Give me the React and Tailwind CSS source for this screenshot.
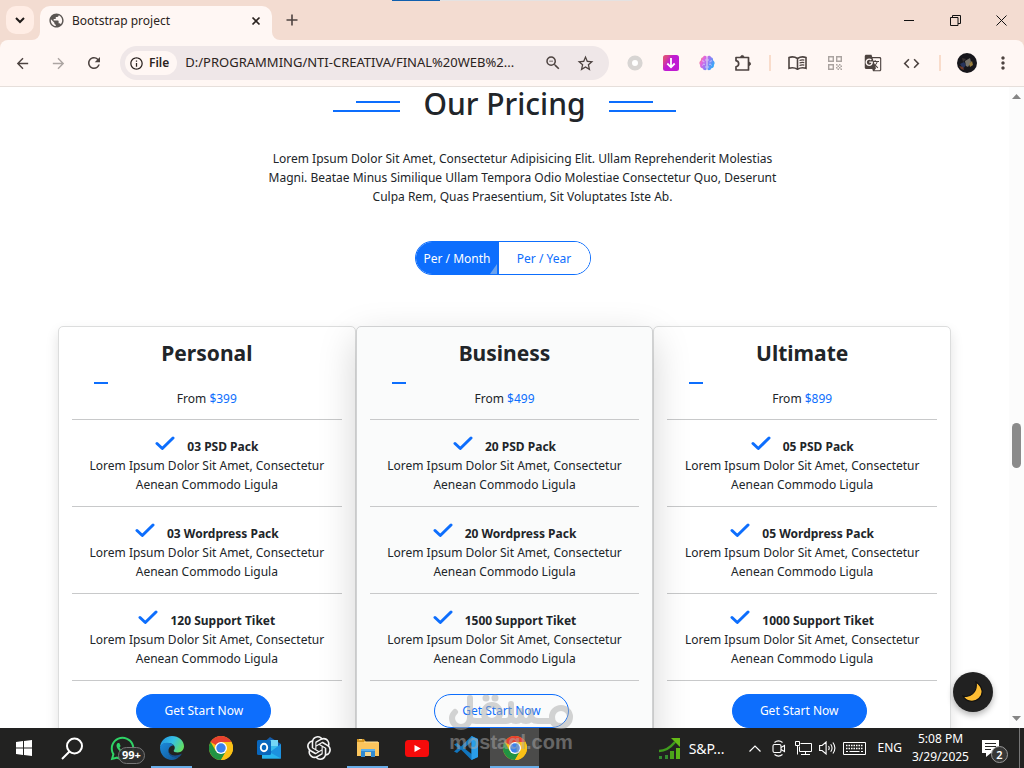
import React from "react";
import {
  MdArrowBack, MdArrowForward, MdRefresh, MdInfoOutline, MdStarBorder,
  MdGTranslate, MdMoreVert, MdPublic, MdCode, MdZoomOut,
} from "react-icons/md";
import { FaWhatsapp } from "react-icons/fa";
import { SiOpenai } from "react-icons/si";

/* ---------- browser chrome ---------- */

function TabStrip() {
  return (
    <div className="flex h-10 shrink-0 items-stretch bg-[#f3dcd1]">
      <button aria-label="Search tabs" className="mt-[6px] ml-[6px] flex size-7 items-center justify-center rounded-[10px] bg-[#ffede5]">
        <svg width="10" height="7" viewBox="0 0 10 7" fill="none" stroke="#1f1a18" strokeWidth="2"><path d="M1 1l4 4 4-4" /></svg>
      </button>
      <div className="flex items-end">
        <svg width="8" height="8" className="-ml-[2px]"><path d="M8 0v8H0a8 8 0 0 0 8-8z" fill="#fff7f4" /></svg>
      </div>
      <div className="mt-[6px] flex w-[232px] items-center rounded-t-[10px] bg-[#fff7f4] pr-[11px] pb-[5px] pl-2">
        <MdPublic size={17} color="#5b5653" />
        <span className="flex-1 pl-[7px] text-[12px] text-[#2b2320]">Bootstrap project</span>
        <button aria-label="Close tab">
          <svg width="10" height="10" viewBox="0 0 10 10" stroke="#2b2320" strokeWidth="1.7"><path d="M1.5 1.5l7 7M8.500 1.500l-7 7" /></svg>
        </button>
      </div>
      <div className="flex items-end">
        <svg width="8" height="8"><path d="M0 0v8h8a8 8 0 0 1-8-8z" fill="#fff7f4" /></svg>
      </div>
      <button aria-label="New tab" className="ml-[6px]">
        <svg width="12" height="12" viewBox="0 0 12 12" stroke="#4d4340" strokeWidth="1.6"><path d="M6 .5v11M.5 6h11" /></svg>
      </button>
      <div className="flex min-w-0 flex-1 items-start justify-center pr-40">
        <div className="flex h-px w-60 bg-[#e4e2e2]"><div className="w-12 bg-[#0f5fae]" /></div>
      </div>
      <div className="flex shrink-0">
        <button aria-label="Minimize" className="flex w-[46px] items-center justify-center">
          <svg width="10" height="10"><path d="M0 5.500h10" stroke="#111" /></svg>
        </button>
        <button aria-label="Restore" className="flex w-[46px] items-center justify-center">
          <svg width="11" height="11" fill="none" stroke="#111"><path d="M.5 2.500h7.500v8H.5zM2.500 2.500v-2h8v8H8" /></svg>
        </button>
        <button aria-label="Close" className="flex w-[46px] items-center justify-center">
          <svg width="11" height="11" stroke="#111"><path d="M.5.5l10 10M10.500.5l-10 10" /></svg>
        </button>
      </div>
    </div>
  );
}

function ToolButton({ label, wide, children }) {
  return (
    <button aria-label={label} className={`flex shrink-0 items-center justify-center ${wide ? "w-[38px]" : "w-9"}`}>
      {children}
    </button>
  );
}

function Brain() {
  return (
    <svg width="16" height="16" viewBox="0 0 16 16">
      <defs>
        <linearGradient id="brain" x1="0" y1="0" x2="1" y2=".5">
          <stop offset="0" stopColor="#f9a04a" /><stop offset=".3" stopColor="#e765dd" />
          <stop offset=".6" stopColor="#9b78f4" /><stop offset="1" stopColor="#38a8f8" />
        </linearGradient>
      </defs>
      <path fill="url(#brain)" d="M7.600 1.500C6.500.3 4.500.8 4 2.200 2.300 2.300 1.600 4 2.100 5.200.4 6-.2 8.500 1.100 9.900c-.3 2 1 3.300 2.500 3.300.6 2 2.900 2.500 4 1.300zM8.400 1.500C9.500.3 11.500.8 12 2.200c1.700.1 2.400 1.800 1.900 3 1.700.8 2.300 3.300 1 4.700.3 2-1 3.300-2.500 3.300-.6 2-2.900 2.500-4 1.300z" />
      <path fill="none" stroke="#d9e2ff" strokeWidth=".7" d="M3 6c1.500-.6 2 .3 2 1.300M7.500 5H6M3.500 10.500C4 9 5 9 6 9.500M7.500 12H6M13 6c-1.500-.6-2 .3-2 1.300M8.500 5H10M12.500 10.500C12 9 11 9 10 9.500M8.500 12H10" />
    </svg>
  );
}

function Toolbar() {
  return (
    <div className="bg-[#f3dcd1]">
      <div className="flex h-[47px] items-stretch rounded-t-[8px] border-b border-[#e6dfdb] bg-[#fff7f4] pr-1 pl-1 text-[#4d4340]">
        <ToolButton label="Back"><MdArrowBack size={17} /></ToolButton>
        <ToolButton label="Forward"><MdArrowForward size={17} color="#aca5a2" /></ToolButton>
        <ToolButton label="Reload"><MdRefresh size={18} /></ToolButton>
        <div className="mx-2 my-[6px] flex min-w-0 flex-1 items-center rounded-full bg-[#efe7e8] pr-[14px] pl-[5px]">
          <button className="flex h-6 items-center gap-[5px] rounded-full bg-[#fff7f4] px-1 pr-2 text-[12px] font-semibold text-[#2b2320]">
            <MdInfoOutline size={15} />File
          </button>
          <input
            aria-label="Address"
            readOnly
            value="D:/PROGRAMMING/NTI-CREATIVA/FINAL%20WEB%2..."
            className="ml-2 min-w-0 flex-1 bg-transparent text-[13px] text-[#2b2320] outline-none"
          />
          <button aria-label="Zoom" className="ml-2"><MdZoomOut size={18} /></button>
          <button aria-label="Bookmark" className="ml-[14px]"><MdStarBorder size={19} /></button>
        </div>
        <ToolButton label="Recorder">
          <svg width="16" height="16"><circle cx="8" cy="8" r="5.300" fill="#fff" stroke="#d8d5d3" strokeWidth="4.600" /></svg>
        </ToolButton>
        <ToolButton label="Downloader">
          <svg width="16" height="16">
            <defs><linearGradient id="dl" x1="0" y1="0" x2=".6" y2=".4"><stop offset=".3" stopColor="#dd4c80" /><stop offset=".8" stopColor="#c01bd2" /></linearGradient></defs>
            <rect width="16" height="16" rx="2.500" fill="url(#dl)" />
            <path d="M8 3v9M4.300 8.500L8 12.300l3.700-3.800" fill="none" stroke="#fff" strokeWidth="1.800" />
          </svg>
        </ToolButton>
        <ToolButton label="Assistant"><Brain /></ToolButton>
        <ToolButton label="Extensions">
          <svg width="18" height="18" viewBox="0 0 18 18" fill="none" stroke="#4d4340" strokeWidth="1.700" strokeLinejoin="round">
            <path d="M2 3.500h12.500v12.500H2v-3.200c3.600-.8 3.600-5.300 0-6.100z" />
            <path d="M6.700 3a1.600 1.600 0 0 1 3.200 0zM15 8.200a1.600 1.600 0 0 1 0 3.200z" fill="#4d4340" strokeWidth=".8" />
          </svg>
        </ToolButton>
        <div className="mr-[7px] ml-2 h-4 w-0.5 shrink-0 self-center bg-[#f9dccb]" />
        <ToolButton label="Reading mode" wide>
          <svg width="19" height="14" viewBox="0 0 19 14" fill="none" stroke="#4d4340" strokeWidth="1.600">
            <path d="M9.500 2.500C7 .8 3.500.6 1 1.500v10.800c2.500-.8 6-.6 8.500 1 2.500-1.600 6-1.800 8.500-1V1.500c-2.500-.9-6-.7-8.500 1zM9.500 2.500v10.800" />
            <path d="M11.500 4.500c1.500-.6 3-.7 4.800-.4M11.500 7c1.500-.6 3-.7 4.800-.4M11.500 9.500c1.500-.6 3-.7 4.800-.4" strokeWidth="1.200" />
          </svg>
        </ToolButton>
        <ToolButton label="QR code" wide>
          <svg width="14" height="14" viewBox="0 0 14 14" fill="none" stroke="#aaa3a0" strokeWidth="1.400">
            <path d="M.7.700h4.600v4.600H.7zM8.700.7h4.600v4.600H8.700zM.7 8.700h4.600v4.600H.7z" />
            <path d="M8 8.700h1.500M11 8.700h1.500M9.500 10.200H11M12.500 10.200H14M8 11.700h1.500M11 11.700h1.500M9.500 13.200H11M12.500 13.200H14" />
          </svg>
        </ToolButton>
        <ToolButton label="Translate" wide><MdGTranslate size={18} /></ToolButton>
        <ToolButton label="Developer tools" wide><MdCode size={19} /></ToolButton>
        <div className="mr-[7px] ml-[9px] h-4 w-0.5 shrink-0 self-center bg-[#f9dccb]" />
        <ToolButton label="Profile" wide>
          <svg width="20" height="20" viewBox="0 0 20 20">
            <circle cx="10" cy="10" r="10" fill="#17161b" />
            <path d="M3 11l4-2 2 3-3 4z" fill="#27345c" /><path d="M2 13l4 1 1 3-3-1z" fill="#6e3a2a" />
            <path d="M8 8l5-3 1 4-3 5-2-1z" fill="#77736b" /><path d="M12 11l3-3 1 4-3 2z" fill="#9a7f3e" /><path d="M5 5l4 1-3 3z" fill="#3b3334" />
          </svg>
        </ToolButton>
        <button aria-label="Menu" className="flex w-[34px] shrink-0 items-center justify-center"><MdMoreVert size={20} /></button>
      </div>
    </div>
  );
}

/* ---------- pricing page ---------- */

const plans = [
  { name: "Personal", price: "$399", features: ["03 PSD Pack", "03 Wordpress Pack", "120 Support Tiket"] },
  { name: "Business", price: "$499", features: ["20 PSD Pack", "20 Wordpress Pack", "1500 Support Tiket"], featured: true },
  { name: "Ultimate", price: "$899", features: ["05 PSD Pack", "05 Wordpress Pack", "1000 Support Tiket"] },
];

function Check() {
  return (
    <svg width="20" height="15" viewBox="0 0 20 15" fill="none" stroke="#0d6efd" strokeWidth="3" strokeLinecap="round" strokeLinejoin="round" className="mb-[5px]">
      <path d="M2 7.500l5.300 5L18 2" />
    </svg>
  );
}

function PlanCard({ plan }) {
  return (
    <article
      className={`flex flex-1 flex-col rounded-[5px] border px-[13px] pt-[11px] text-center ${
        plan.featured
          ? "relative z-10 border-[#d0d1d2] bg-[#fafbfb] shadow-[0_13px_38px_rgba(0,0,0,0.175)]"
          : "border-[#dcdddd] bg-white shadow-[0_6px_13px_rgba(0,0,0,0.12)]"
      }`}
    >
      <h2 className="text-[21px] leading-[30px] font-bold">{plan.name}</h2>
      <div className="mt-[14px] ml-[22px] h-0.5 w-[14px] bg-[#0d6efd]" />
      <p className="mt-[5px] leading-[19px]">From <span className="text-[#0d6efd]">{plan.price}</span></p>
      <ul className="mt-[11px]">
        {plan.features.map((feature) => (
          <li key={feature} className="h-[87px] border-t border-[#c8c9ca] pt-[16px] leading-[19px]">
            <div className="flex h-5 items-center justify-center gap-3">
              <Check />
              <strong className="font-bold">{feature}</strong>
            </div>
            Lorem Ipsum Dolor Sit Amet, Consectetur
            <br />
            Aenean Commodo Ligula
          </li>
        ))}
      </ul>
      <div className="border-t border-[#c8c9ca] pt-[13px] pr-[6px] pb-5">
        <button
          className={`h-[34px] w-[135px] rounded-full border border-[#0d6efd] text-[12px] ${
            plan.featured ? "text-[#0d6efd]" : "bg-[#0d6efd] text-white"
          }`}
        >
          Get Start Now
        </button>
      </div>
    </article>
  );
}

function HeadingLines({ flip }) {
  return (
    <div className={`flex w-[67px] flex-col gap-[7px] ${flip ? "items-start" : "items-end"}`}>
      <div className="h-0.5 w-11 bg-[#0d6efd]" />
      <div className="h-0.5 w-full bg-[#0d6efd]" />
    </div>
  );
}

function Pricing() {
  return (
    <main className="min-w-0 flex-1 text-[12px] text-[#212529]">
      <div className="flex h-[38px] items-center justify-center gap-[23px]">
        <HeadingLines />
        <h1 className="pb-1 text-[30px] leading-[34px] font-medium">Our Pricing</h1>
        <HeadingLines flip />
      </div>
      <p className="mt-6 pl-9 text-center leading-[19px]">
        Lorem Ipsum Dolor Sit Amet, Consectetur Adipisicing Elit. Ullam Reprehenderit Molestias
        <br />
        Magni. Beatae Minus Similique Ullam Tempora Odio Molestiae Consectetur Quo, Deserunt
        <br />
        Culpa Rem, Quas Praesentium, Sit Voluptates Iste Ab.
      </p>
      <div className="mt-[35px] flex justify-center pr-1">
        <div className="flex h-[34px] overflow-hidden rounded-full border border-[#0d6efd]">
          <button className="relative w-[83px] bg-[#0d6efd] pt-0.5 text-white">
            Per / Month
            <svg width="7" height="10" className="absolute right-[2px] bottom-0"><path d="M7 0v10H0z" fill="#6ba3ee" /></svg>
          </button>
          <button className="w-[91px] bg-white pt-0.5 text-[#0d6efd]">Per / Year</button>
        </div>
      </div>
      <section className="mx-[58px] mt-[51px] flex">
        {plans.map((plan) => <PlanCard key={plan.name} plan={plan} />)}
      </section>
    </main>
  );
}

function Scrollbar() {
  return (
    <div className="flex w-[15px] shrink-0 flex-col items-center bg-[#fcfcfc]">
      <svg width="9" height="5" className="mt-[7px]"><path d="M0 5l4.500-5L9 5z" fill="#858585" /></svg>
      <div className="flex-[324]" />
      <div className="h-[45px] w-[9px] rounded-full bg-[#8b8b8b]" />
      <div className="flex-[248]" />
      <svg width="9" height="5" className="mb-[7px]"><path d="M0 0l4.500 5L9 0z" fill="#858585" /></svg>
    </div>
  );
}

/* ---------- taskbar ---------- */

function ChromeLogo() {
  return (
    <svg width="24" height="24" viewBox="0 0 24 24">
      <circle cx="12" cy="12" r="12" fill="#fbc116" />
      <path d="M12 12L1.600 6A12 12 0 0 1 22.400 6H12z" fill="#e8412f" />
      <path d="M1.600 6A12 12 0 0 0 12 24l5.200-9L12 12l-5.200 3z" fill="#229342" />
      <path d="M12 6h10.400A12 12 0 0 1 12 24l5.200-9z" fill="#fbc116" />
      <circle cx="12" cy="12" r="6" fill="#fff" /><circle cx="12" cy="12" r="4.700" fill="#3b82ee" />
    </svg>
  );
}

function EdgeLogo() {
  return (
    <svg width="24" height="24" viewBox="0 0 24 24">
      <defs>
        <linearGradient id="edgeTop" x1="0" y1=".2" x2="1" y2=".6"><stop offset="0" stopColor="#2295e2" /><stop offset=".5" stopColor="#36c0e5" /><stop offset="1" stopColor="#63df61" /></linearGradient>
        <linearGradient id="edgeLow" x1="0" y1="0" x2="1" y2="1"><stop offset="0" stopColor="#1b8bdc" /><stop offset="1" stopColor="#115494" /></linearGradient>
      </defs>
      <path d="M0 12C0 5 5.500 0 12 0s12 4.800 12 10.300c0 3.700-2.800 6.100-6.200 6.100-3 0-4.400-1-4.100-2 .8-1 1.200-2 1-3.200C14.300 8.800 11.500 7 8 7c-4.500 0-7.500 2-8 5z" fill="url(#edgeTop)" />
      <path d="M0 11.500C.8 8 4 6.700 7.500 6.700c3.300 0 5 1.200 6.500 2.800-2.500-.3-5.500 1.500-5.500 5.300 0 4.500 4.500 7.500 10.500 6-2 2.200-4.500 3.200-7 3.200C5.300 24 0 18.500 0 11.500z" fill="url(#edgeLow)" />
      <path d="M8.600 13.300c-.6 5.200 5.500 8.500 13.300 4.200-.7 1.600-1.700 2.700-2.900 3.600-6 1.800-11.500-2-10.400-7.800z" fill="#174e8a" />
    </svg>
  );
}

function OutlookLogo() {
  return (
    <svg width="25" height="24" viewBox="0 0 25 24">
      <path d="M13 1l11 7v14H5V8z" fill="#155ca9" /><path d="M7 4h14v11H7z" fill="#38bbec" /><path d="M14 4h7v6h-7z" fill="#74d6f5" />
      <path d="M24 8v14.500H5L14.500 15z" fill="#1c91df" /><path d="M5 12l19 10.500H5z" fill="#27b4ee" />
      <rect y="4" width="14" height="15" rx="1.500" fill="#0967bd" />
      <ellipse cx="7" cy="11.500" rx="3.200" ry="3.700" fill="none" stroke="#fff" strokeWidth="1.900" />
    </svg>
  );
}

function VsCodeLogo() {
  return (
    <svg width="24" height="24" viewBox="0 0 24 24">
      <path d="M17.500 0L24 3v18l-6.500 3L7 13.500 3 17 0 15.500 4.200 12 0 8.500 3 7l4 3.500z" fill="#1276be" />
      <path d="M17.500 6v12L10 12z" fill="#1f201f" /><path d="M17.500 0L24 3v18l-6.500 3z" fill="#2a9eea" />
    </svg>
  );
}

function ExplorerLogo() {
  return (
    <svg width="22" height="20" viewBox="0 0 22 20">
      <path d="M0 1h7l2 3h13v3H0z" fill="#d29420" /><path d="M0 4h22v14H0z" fill="#fbc55d" /><path d="M2 1.700h3M7 4h14" stroke="#ffe5a0" />
      <path d="M4 11h14v8h-4v-5H8v5H4z" fill="#318bd2" /><path d="M8 14h6v4H8z" fill="#f4d690" /><path d="M4 11h14v2H4z" fill="#5bb1ed" />
    </svg>
  );
}

const apps = [
  { label: "Edge", icon: <EdgeLogo />, open: true },
  { label: "Chrome", icon: <ChromeLogo /> },
  { label: "Outlook", icon: <OutlookLogo /> },
  { label: "ChatGPT", icon: <SiOpenai size={24} color="#f4f4f4" /> },
  { label: "File Explorer", icon: <ExplorerLogo />, open: true },
  {
    label: "YouTube",
    icon: <svg width="24" height="17"><rect width="24" height="17" rx="3.500" fill="#f60b0b" /><path d="M9.500 5v7l6.300-3.500z" fill="#fff" /></svg>,
  },
  { label: "VS Code", icon: <VsCodeLogo /> },
  { label: "Chrome window", icon: <ChromeLogo />, open: true, active: true },
];

function TaskbarApp({ app }) {
  return (
    <button aria-label={app.label} className={`relative flex w-[49px] shrink-0 items-center justify-center ${app.active ? "bg-[#4b4b4a]" : ""}`}>
      {app.icon}
      {app.open && <span className={`absolute bottom-0 h-0.5 bg-[#69ade8] ${app.active ? "inset-x-0" : "inset-x-1"}`} />}
    </button>
  );
}

function Tray() {
  return (
    <div className="ml-auto flex shrink-0 items-stretch text-[12px] text-white">
      <button className="flex items-center gap-2 text-[14px]">
        <svg width="23" height="22" viewBox="0 0 23 22">
          <path d="M1 14c6 0 11-3 16-9" fill="none" stroke="#409c1e" strokeWidth="2.500" /><path d="M13 1h9v9z" fill="#64bb16" />
          <path d="M18 11h4v11h-4z" fill="#5bb617" /><path d="M12 14h4v8h-4z" fill="#4ba31a" /><path d="M7 18h3v4H7zM1 19h3v3H1z" fill="#338a30" />
        </svg>
        S&amp;P...
      </button>
      <button aria-label="Hidden icons" className="ml-[19px] flex w-6 items-center justify-center">
        <svg width="12" height="7" fill="none" stroke="#fff" strokeWidth="1.200"><path d="M.5 6.500L6 1l5.500 5.500" /></svg>
      </button>
      <button aria-label="Camera" className="flex w-6 items-center justify-center">
        <svg width="14" height="17" fill="none" stroke="#fff" strokeWidth="1.100"><rect x="1" y="4.500" width="8" height="8" rx="1.500" /><path d="M9 7.500l3.500-2v6l-3.500-2M2.500 2.500c2.500-2 5.500-2 8 0M2.500 14.500c2.500 2 5.500 2 8 0" /></svg>
      </button>
      <button aria-label="Network" className="flex w-6 items-center justify-center">
        <svg width="17" height="14" fill="none" stroke="#fff"><path d="M5.500 2.500h11v8h-12v-5M10.500 10.500v3M6 13.500h9M.5.5h4v4h-4zM2.500 4.500v9" /></svg>
      </button>
      <button aria-label="Volume" className="flex w-6 items-center justify-center">
        <svg width="17" height="14" fill="none" stroke="#fff" strokeWidth="1.100"><path d="M.6 4.500h2.500l4-3.500v12l-4-3.500H.6zM9.500 5q1.400 2 0 4M11.700 3.200q2.700 3.800 0 7.600M13.900 1.500q4 5.500 0 11" /></svg>
      </button>
      <button aria-label="Touch keyboard" className="ml-1 flex items-center">
        <svg width="23" height="13" fill="none" stroke="#fff"><path d="M.5.5h22v12H.5z" /><path d="M3 3.500h17M3 6.500h17" strokeDasharray="1.500 1" strokeWidth="1.300" /><path d="M3 9.500h2M6.500 9.500h10M18 9.500h2" /></svg>
      </button>
      <button className="ml-[11px]">ENG</button>
      <div className="ml-2 flex w-[61px] flex-col justify-center text-center leading-[18px] whitespace-nowrap">
        <span>5:08 PM</span><span>3/29/2025</span>
      </div>
      <button aria-label="2 notifications" className="relative ml-[11px] flex w-[26px] items-center">
        <svg width="17" height="17" viewBox="0 0 17 17"><path d="M0 0h17v13h-8l-5 4v-4H0z" fill="#fff" /><path d="M3 3.500h11M3 6.500h11M3 9.500h6" stroke="#252524" /></svg>
        <span className="absolute right-0 bottom-[5px] flex size-[17px] items-center justify-center rounded-full border border-[#999] bg-[#373736] text-[11px] leading-none font-semibold">2</span>
      </button>
      <div className="ml-[11px] w-px bg-[#777]" />
      <div className="w-1" />
    </div>
  );
}

function Taskbar() {
  return (
    <div className="relative z-20 flex h-10 shrink-0 items-stretch bg-[#222221]">
      <button aria-label="Start" className="flex w-12 shrink-0 items-center justify-center">
        <svg width="16" height="16" fill="#fff"><path d="M0 2l7-1v6.500H0zM8 .9L16 0v7.500H8zM0 8.500h7V15l-7-1zM8 8.500h8V16l-8-1.100z" /></svg>
      </button>
      <button aria-label="Search" className="flex w-[49px] shrink-0 items-center justify-center">
        <svg width="23" height="23" fill="none" stroke="#fff" strokeWidth="2"><circle cx="13.500" cy="9" r="7.500" /><path d="M8.500 14.500L1 22" /></svg>
      </button>
      <button aria-label="WhatsApp" className="relative flex w-[50px] shrink-0 items-center justify-center">
        <FaWhatsapp size={27} color="#2fd366" />
        <span className="absolute bottom-1 left-[21px] flex h-[17px] items-center rounded-full border border-[#777] bg-[#303030]/90 px-[3px] text-[11px] font-bold text-white">99+</span>
      </button>
      {apps.map((app) => <TaskbarApp key={app.label} app={app} />)}
      <Tray />
    </div>
  );
}

function Watermark() {
  return (
    <div className="pointer-events-none absolute bottom-[14px] left-1/2 z-30 flex w-[124px] -translate-x-[63px] flex-col items-center text-[#aaa] opacity-50">
      <svg width="124" height="36" viewBox="0 0 124 36" fill="none" stroke="currentColor" strokeWidth="6" strokeLinecap="round" strokeLinejoin="round" role="img" aria-label="مستقل">
        <path d="M21 4v20a9 9 0 1 1-18 0q0-3 3-6M21 23q0 4 6 4h16a8 8 0 1 0-8-8q0 8 9 8h13q5 0 5-5V10M62 21q0 6 5 6t5-6v-4M72 21q0 6 5 6t5-6v-4M82 21q0 6 7 6h14M112 32a9 9 0 1 0-9-9q0 9 9 9z" />
        <g fill="currentColor" stroke="none"><circle cx="37" cy="4" r="3.500" /><circle cx="46" cy="4" r="3.500" /></g>
      </svg>
      <span className="font-['Liberation_Sans',sans-serif] text-[20px] leading-6 font-bold">mostaql.com</span>
    </div>
  );
}

export default function App() {
  return (
    <div className="relative flex h-screen flex-col overflow-hidden bg-white font-['Noto_Sans',sans-serif]">
      <TabStrip />
      <Toolbar />
      <div className="relative flex min-h-0 flex-1">
        <Pricing />
        <Scrollbar />
        <button aria-label="Dark mode" className="absolute right-[31px] bottom-4 z-20 flex size-10 items-center justify-center rounded-full bg-[#212121] shadow-[0_3px_6px_rgba(0,0,0,0.3)]">
          <svg width="22" height="22" viewBox="0 0 22 22"><path d="M14 1c7 5 8 12 3 16.500C12 22 4 21 1 15c6 2 15-3 13-14z" fill="#fdbd33" stroke="#111" strokeWidth="1.200" /></svg>
        </button>
      </div>
      <Taskbar />
      <Watermark />
    </div>
  );
}
